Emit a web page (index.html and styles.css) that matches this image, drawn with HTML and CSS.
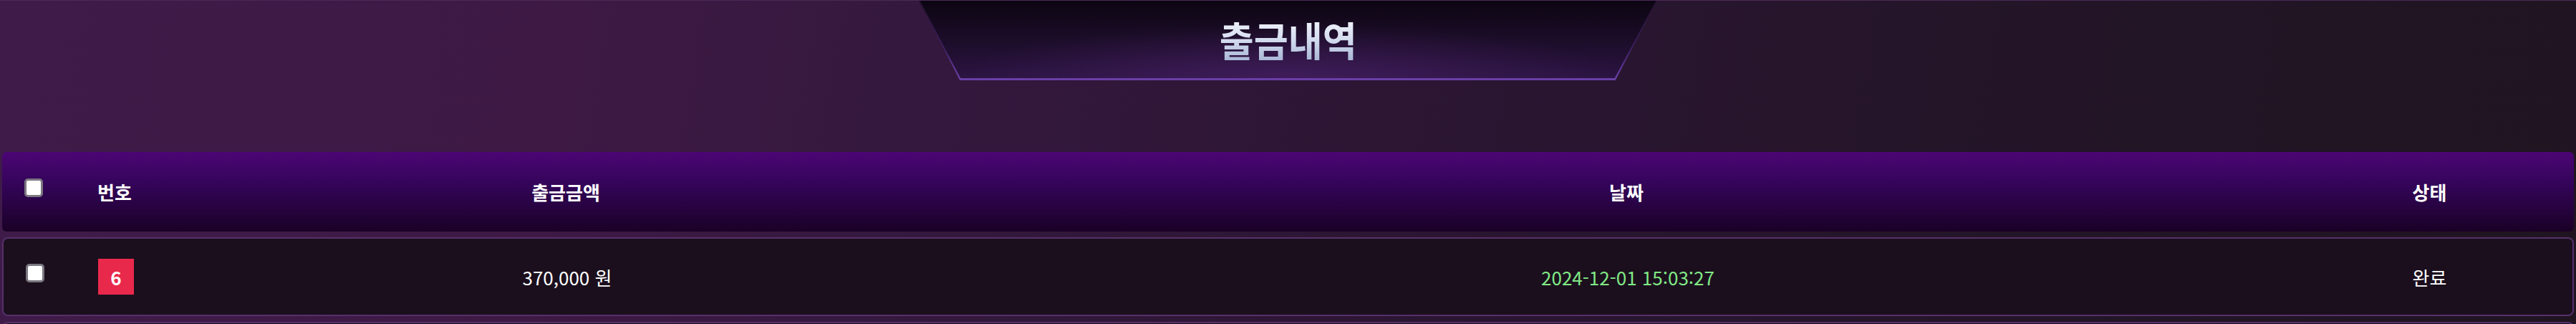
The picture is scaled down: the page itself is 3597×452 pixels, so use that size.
FILE: index.html
```html
<!DOCTYPE html>
<html lang="ko">
<head>
    <meta charset="UTF-8">
    <meta name="viewport" content="width=device-width, initial-scale=1.0">
    <title>출금내역</title>
    <link rel="stylesheet" href="styles.css">
</head>
<body>
    <div class="page">
        <div class="title-frame">
            <div class="title-inner">
                <h1 class="title">출금내역</h1>
            </div>
        </div>

        <div class="list">
            <div class="row head-row">
                <div class="cell"><input type="checkbox" class="check"></div>
                <div class="cell">번호</div>
                <div class="cell">출금금액</div>
                <div class="cell">날짜</div>
                <div class="cell">상태</div>
            </div>

            <div class="row data-row">
                <div class="cell"><input type="checkbox" class="check"></div>
                <div class="cell"><span class="num-badge">6</span></div>
                <div class="cell">370,000 원</div>
                <div class="cell date">2024-12-01 15:03:27</div>
                <div class="cell">완료</div>
            </div>

            <!-- next block starts just below the fold -->
            <div class="row data-row"></div>
        </div>
    </div>
</body>
</html>
```

FILE: styles.css
```css
/* Global styles */
body {
    margin: 0;
    padding: 0;
    font-family: "Noto Sans CJK KR", "Noto Sans", sans-serif;
    color: #fff;
    background: linear-gradient(100deg, #3f1b49 0%, #3d1944 22%, #33183c 38%, #2a1531 58%, #231527 78%, #1f1420 100%);
    height: 452px;
    overflow: hidden;
}

.page {
    border-top: 1px solid #4a2a57;
}

/* title plate */
.title-frame {
    width: 1032px;
    height: 111px;
    margin: 0 auto;
    padding-bottom: 3px;
    box-sizing: border-box;
    background: linear-gradient(180deg, #24112f 0%, #3b1e5c 60%, #6a3fa6 97%);
    clip-path: polygon(0 0, 100% 0, 94.3% 100%, 5.6% 100%);
}

.title-inner {
    height: 108px;
    display: flex;
    justify-content: center;
    align-items: center;
    background:
        radial-gradient(ellipse 45% 70% at 50% 100%, rgba(80, 35, 110, 0.55), transparent 100%),
        linear-gradient(180deg, #0c0512 0%, #1a0c26 45%, #2b1442 100%);
    clip-path: polygon(0.2% 0, 99.8% 0, 94.2% 100%, 5.7% 100%);
}

.title {
    margin: 0;
    font-size: 58px;
    font-weight: 700;
    line-height: 1;
    display: inline-block;
    transform: scaleX(0.9);
    background: linear-gradient(180deg, #f2f4fc 0%, #d4dcef 50%, #a9b7d6 100%);
    -webkit-background-clip: text;
    background-clip: text;
    color: transparent;
}

/* table */
.list {
    margin-top: 100px;
    padding: 0 3px;
    display: flex;
    flex-direction: column;
    gap: 8px;
}

.row {
    display: grid;
    grid-template-columns: 88px 138px 1122px 1840px 1fr;
    align-items: center;
    font-size: 26px;
    box-sizing: border-box;
    border-radius: 8px;
}

.cell {
    text-align: center;
    display: flex;
    justify-content: center;
    align-items: center;
}

.head-row {
    height: 111px;
    font-weight: 700;
    background: linear-gradient(180deg, #4b0674 0%, #34045a 40%, #1a0126 100%);
    border-radius: 6px;
}

.data-row {
    height: 110px;
    border: 2px solid #56306a;
    background-color: #1b0f1d;
}

.check {
    appearance: none;
    -webkit-appearance: none;
    width: 26px;
    height: 26px;
    margin: 0 0 11px 0;
    background: #fff;
    border: 3px solid #7b7780;
    border-radius: 5px;
    box-sizing: border-box;
}

.num-badge {
    width: 50px;
    height: 50px;
    background-color: #e9294c;
    font-weight: 700;
    display: flex;
    justify-content: center;
    align-items: center;
}

.date {
    color: #80e985;
}
```
